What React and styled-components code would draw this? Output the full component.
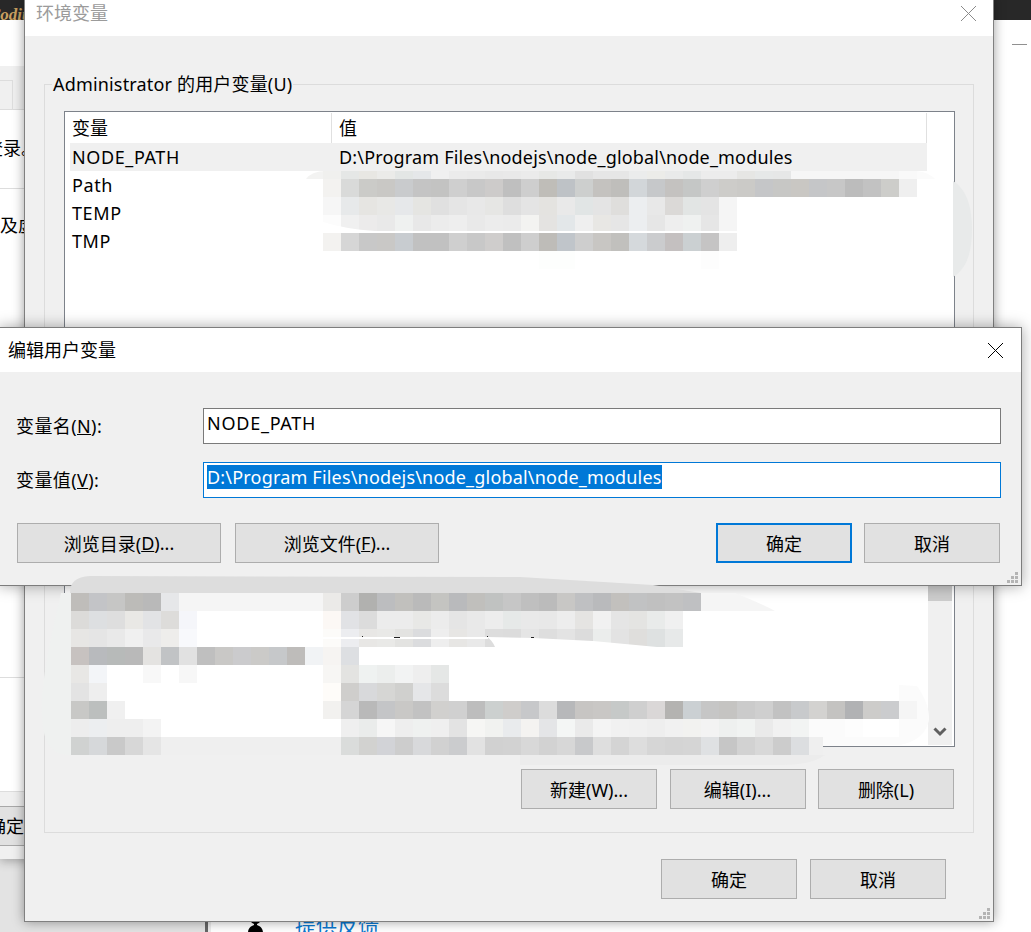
import React from "react";
import styled, { createGlobalStyle } from "styled-components";

const GlobalStyle = createGlobalStyle`
  html, body {
    margin: 0;
    padding: 0;
    background: #e3e3e3;
  }
  * {
    box-sizing: border-box;
  }
`;

// mosaic columns start at x = 323 and step 18px, "-" leaves a hole
const topRows = [
  { y: 171, h: 8, cells: "f0f0ee e5e7e6 e8e7e3 ebebe9 e3e6e5 e5e7e9 f0f0f0 ebebeb eaeaea e8e8e8 e9e9e9 ebebeb e7e8e6 e9eaea e1e1e1 e6e6e6 e6e6e6 ebecec ecece9 e9eaea e5e7e7 ececec ececec e6e6e4 e6e8e8 e6e7e7 f6f6f6 f6f6f6 f6f6f6 f6f6f6 f6f6f6 f6f6f6 f9f9f9" },
  { y: 179, h: 18, cells: "f3f2f0 d9dad9 cbcbc8 c9c8c5 c9cbcd c4c4c4 c3c3c2 cfcfcf c8c8c8 cdcbca bfbfbf cecece bfbdb8 bec2c6 cdcfce c4c2bf bfbebb d2d6d9 c6c8ca c4c2c0 c5c7c6 cfcfcf cdccc9 cbcac7 c5c6c8 c7c7c5 c9c7c3 c5c6c8 c7c7c7 bcbcbc c2c2c2 cdcdca efefef" },
  { y: 197, h: 18, cells: "f6f6f6 e7e9ea e6e5e2 e8e8e6 e6e8ea e5e5e2 e0e0e0 e5e5e5 e8e8e8 e6e6e4 dedede e4e4e4 e4e3e0 e9e9e9 e1e5e5 e4e4e4 dfdedc eceef0 e8e8e8 dbd9d7 e2e5e4 e4e4e4 f5f5f5" },
  { y: 215, h: 16, cells: "fcfcfc f0f0f0 ecebeb e9e9e9 eff1f0 e8e8e8 ececec eeeeee e9e9e9 ececec ebebeb f3f3f1 e4e3e1 e3e7e9 efefef e8e7e4 e6e6e6 eceef0 e6e6e6 eeeeee eff1f0 e6e6e6 f5f5f5" },
  { y: 233, h: 18, cells: "f3f2f0 d6d6d6 c8c8c8 c9c8c6 c8ccd0 c1c1c1 c1c1c1 cfcfcf c8c8c8 cfcdcc c0c0c0 cecece bebcb8 c0c5ca cecece c8c6c3 c1c0bd d5d9dc cbccce c4c0c0 cbd0d2 c5c4c4 eeeeee" },
  { y: 251, h: 18, cells: "- - - - - - - - - - - - fdfefd fdfefd - - - - - - - fdfdfd" },
];

// lower list, columns start at x = 71
const bottomRows = [
  { y: 593, cells: "bfbdba c3c4c7 c6c6c5 bcbbb8 b9b9b9 e6e7e9 f5f5f5 f5f5f5 f5f5f5 f5f5f5 f5f5f5 f5f5f5 f5f5f5 f5f5f5 ebeae8 cdcdcd b1b1af bcbdbf c1c0bd bababa c4c4c1 b9babc c0bfbc c0c2c1 c6c6c6 bfbfbf bbbbbb c8c7c5 bfc0c2 b9babc c2c0bd c1c2c3 c0c0c0 c2c2c2 bfc0c2" },
  { y: 611, cells: "dcdbd9 dddfe1 dedede e9e8e5 e2e3e5 dddcda f5f6fa - - - - - - - fcf8f5 e1e2e5 dcdcdc ececec ececec e8e8e6 ececec e5e5e5 e9e9e9 ededed e6e9e8 e9e9e9 e8e8e8 ededed e5e4e2 f1f1f1 e5e5e5 e4e4e2 e9ebea f0f0f0" },
  { y: 629, cells: "e7e6e4 e5e5e5 e9e9e9 f0f0f0 e9e9ea eeedeb f8f9fc - - - - - - - fcfbf9 ecedf0 e8e7e5 e9e9e7 e3e3e1 dbdcde eeeeee e7e6e4 e9e9e9 dddddd dcdcdc e5e5e5 dedede e3e3e3 dcdcdc ebedec e3e3e3 dfdedc dee1e1 e7e9e9" },
  { y: 647, cells: "c7c2c0 b8babd b7bab9 b9b9b9 e4e3e1 c1c3c5 e1e1e1 bfbfbf c9c8c6 cbcbcd cbcac8 c6c8ca bebcba f1f3f5 f6f4f2 dddfe2" },
  { y: 665, cells: "e8e7e5 f3f5f8 - - f8f8f8 - f7f7f7 - - - - - - - f7f6f4 e3e3e1 eff2f1 eceeed f2f3f3 eeeeee e5e7e6" },
  { y: 683, cells: "e3e3e3 eeeeee - - - - - - - - - - - - fefcf9 cfcecc d8d9db d6d6d4 d0d0ce e5e6e8 dcdcdc" },
  { y: 701, cells: "c8c8c6 bcbfbe f0f0f0 - - - - - - - - - - - f2f1ef d5d5d5 b9b9b9 c4c5c7 c9c8c6 c2c2c2 d1d0ce d0d0d0 bdbdbd ccd0cf cfcdcb c7c8ca dcdcdc b7b8ba c7c5c3 c9c7c5 c6c9c8 cfcfcf dad7d7 b4b3b1 cbd0d3 c6c6c6 c5c4c2 cbcbcb cfcfcf c2c2c2 c8cacc d3d2d0 c4c3c1 b1b2b4 cdccca cbccce f5f5f5" },
  { y: 719, cells: "ededed eceef0 eeeeee eeeeee f3f3f3 - - - - - - - - - - efefef eaeceb f6f6f6 eeeeee eff1f0 efefef e3e3e3 f6f6f4 f1f2f0 e9ebed f4f3f1 e4e5e7 f4f6f5 eaeaea f4f4f4 f1f1f1 f0f0f0 eeeeee f1f1f1 f2f2f0 f3f3f3 eef0ef f1f3f2 eaeaea f1f1f1 f2f4f3 fbfbfb fbfbfb fdfdfd" },
  { y: 737, cells: "d0d2d1 d6d8da c9c9c9 d7d7d7 e5e5e5 efefef efefef efefef efefef efefef efefef efefef efefef efefef efefef dadcdb d2d2d0 d2d3d7 cdcdcd d8d9db d1d1d1 cbccce e2e2e2 d1d1d1 d2d2d2 d8d8d8 d2d2d2 d7d7d7 c8c9cb dedede d4d4d4 dddddd d6d6d6 d4d4d4 d5d5d5 dfe1e3 c6c6c6 d2d2d2 d8d8d8 cccccc dcdee0" },
];

function MosaicRow({ x, y, h, cells }) {
  return cells.split(" ").map((color, i) =>
    color === "-" ? null : (
      <rect key={i} x={x + i * 18} y={y} width="18" height={h} fill={`#${color}`} />
    )
  );
}

function Mosaic() {
  return (
    <MosaicLayer viewBox="0 0 1031 932" shapeRendering="geometricPrecision">
      {/* smears round the blurred part */}
      <path d="M306 179 Q312 171 326 171 H341 V179 Z" fill="#f3f3f2" />
      <path d="M953 181 C968 190 972 210 972 229 C972 250 968 268 953 277 Z" fill="#e8eaea" />
      <path d="M899 171 H917 Q928 172 935 179 H899 Z" fill="#fbfbfb" />
      <path d="M70 593 C70 582 76 577 90 576 L520 577 L653 585 L701 593 Z" fill="#dddddd" />
      <path d="M701 593 H735 Q760 603 775 611 H701 Z" fill="#f5f5f5" />
      <path d="M61 593 C55 620 40 680 42 715 C43 745 52 755 71 755 V593 Z" fill="#eff1f0" />
      <path d="M899 685 L917 686 Q930 705 929 720 Q925 740 900 745 L823 746 V737 H899 Z" fill="#fbfbfb" />
      <path d="M520 755 H825 Q812 765 780 765 H520 Z" fill="#ececec" />
      <rect x="809" y="737" width="14" height="18" fill="#efefef" />

      <g shapeRendering="crispEdges">
        {topRows.map((row) => (
          <MosaicRow key={row.y} x={323} y={row.y} h={row.h} cells={row.cells} />
        ))}
        {bottomRows.map((row) => (
          <MosaicRow key={row.y} x={71} y={row.y} h={18} cells={row.cells} />
        ))}
      </g>

      <path d="M323 222 Q345 229 375 231 H323 Z" fill="#ffffff" />
      <rect x="323" y="637" width="165" height="2" fill="#ffffff" />
      <path d="M487 637 L533 638 L593 641 L657 647 H495 Q492 640 487 637 Z" fill="#ffffff" />
      <g fill="#222222">
        <rect x="362" y="636" width="1" height="1" />
        <rect x="394" y="637" width="6" height="1" />
        <rect x="487" y="636" width="1" height="1" />
        <rect x="531" y="637" width="3" height="1" />
      </g>
    </MosaicLayer>
  );
}

function CloseIcon({ color }) {
  return (
    <svg width="15" height="15" viewBox="0 0 15 15" fill="none" stroke={color} strokeWidth="1">
      <path d="M0 0 L15 15 M15 0 L0 15" />
    </svg>
  );
}

function Grip() {
  const dots = [[8, 0], [4, 4], [8, 4], [0, 8], [4, 8], [8, 8]];
  return (
    <GripIcon width="11" height="11" viewBox="0 0 11 11" fill="#b4b4b4">
      {dots.map(([x, y]) => (
        <rect key={`${x}-${y}`} x={x} y={y} width="3" height="3" />
      ))}
    </GripIcon>
  );
}

function App() {
  return (
    <Desktop>
      <GlobalStyle />

      <BehindWindow>
        <DarkStrip>
          <Brand>Codit</Brand>
        </DarkStrip>
        <BehindColumns>
          <LeftPane>
            <TabStrip>
              <Tab />
            </TabStrip>
            <PaneRow $height={79} $clip={-15}>登录。</PaneRow>
            <PaneText>及虚拟内存</PaneText>
            <Divider $at={416} />
            <Divider $at={113} />
            <PaneFooter>
              <PaneButton>确定</PaneButton>
            </PaneFooter>
          </LeftPane>
          <RightPane>
            <Minimize />
          </RightPane>
        </BehindColumns>
      </BehindWindow>

      <HelpPanel>
        <svg width="16" height="24" viewBox="0 0 16 24" fill="#000000">
          <circle cx="7.5" cy="5.5" r="5.5" />
          <path d="M6 10 H9 V12 C12 13 15 15 15 20 H0 C0 15 3 13 6 12 Z" />
          <rect x="13" y="8" width="2" height="1" />
        </svg>
        <HelpLink>提供反馈</HelpLink>
      </HelpPanel>

      <BackWindow>
        <TitleBar $height={36} $left={11} $right={17} $bottom={10}>
          <TitleText $muted>环境变量</TitleText>
          <CloseIcon color="#8a8a8a" />
        </TitleBar>
        <BackBody>
          <Group>
            <GroupLabel>Administrator 的用户变量(U)</GroupLabel>
            <VarList>
              <ListHead>
                <HeadCell>变量</HeadCell>
                <HeadCell>值</HeadCell>
              </ListHead>
              <VarRow $selected>
                <VarName>NODE_PATH</VarName>
                <VarValue>D:\Program Files\nodejs\node_global\node_modules</VarValue>
              </VarRow>
              <VarRow>
                <VarName>Path</VarName>
              </VarRow>
              <VarRow>
                <VarName>TEMP</VarName>
              </VarRow>
              <VarRow>
                <VarName>TMP</VarName>
              </VarRow>
              <Scrollbar>
                <Thumb />
                <svg width="14" height="10" viewBox="0 0 14 10" fill="none" stroke="#606060" strokeWidth="3">
                  <path d="M1.5 1.5 L7 7 L12.5 1.5" />
                </svg>
              </Scrollbar>
            </VarList>
            <GroupActions>
              <Button>新建(W)...</Button>
              <Button>编辑(I)...</Button>
              <Button>删除(L)</Button>
            </GroupActions>
          </Group>
          <WindowActions>
            <Button>确定</Button>
            <Button>取消</Button>
          </WindowActions>
        </BackBody>
        <Grip />
      </BackWindow>

      <EditDialog>
        <TitleBar $height={44} $left={8} $right={18}>
          <TitleText>编辑用户变量</TitleText>
          <CloseIcon color="#000000" />
        </TitleBar>
        <DialogBody>
          <FormGrid>
            <FieldLabel>
              变量名(<u>N</u>):
            </FieldLabel>
            <FieldBox>NODE_PATH</FieldBox>
            <FieldLabel>
              变量值(<u>V</u>):
            </FieldLabel>
            <FieldBox $focused>
              <Selection>D:\Program Files\nodejs\node_global\node_modules</Selection>
            </FieldBox>
          </FormGrid>
          <DialogActions>
            <Button $wide>
              浏览目录(<u>D</u>)...
            </Button>
            <Button $wide>
              浏览文件(<u>F</u>)...
            </Button>
            <ConfirmGroup>
              <Button $primary>确定</Button>
              <Button>取消</Button>
            </ConfirmGroup>
          </DialogActions>
        </DialogBody>
        <Grip />
      </EditDialog>

      <Mosaic />
    </Desktop>
  );
}

const Desktop = styled.div`
  position: relative;
  width: 1031px;
  height: 932px;
  overflow: hidden;
  background: #e3e3e3;
  font-family: "Noto Sans", "Noto Sans CJK SC", sans-serif;
  font-size: 18px;
  color: #000000;
`;

const BehindWindow = styled.div`
  position: absolute;
  left: 0;
  top: 0;
  width: 1031px;
  height: 859px;
  display: flex;
  flex-direction: column;
  background: #ffffff;
  box-shadow: 0 2px 10px rgba(0, 0, 0, 0.3);
`;

const DarkStrip = styled.div`
  height: 20px;
  flex: none;
  background: #282828;
  overflow: hidden;
`;

const Brand = styled.div`
  margin-left: -11px;
  font-family: "Liberation Serif", serif;
  font-style: italic;
  font-weight: bold;
  font-size: 17px;
  line-height: 30px;
  color: #c9a060;
`;

const BehindColumns = styled.div`
  flex: 1;
  display: flex;
`;

const LeftPane = styled.div`
  width: 205px;
  display: flex;
  flex-direction: column;
`;

const TabStrip = styled.div`
  height: 44px;
  margin-top: 46px;
  padding-top: 14px;
  background: #f0f0f0;
  border-bottom: 1px solid #dddddd;
`;

const Tab = styled.div`
  width: 13px;
  height: 30px;
  border-top: 1px solid #dddddd;
  border-right: 1px solid #dddddd;
`;

const PaneRow = styled.div`
  height: ${(props) => props.$height}px;
  margin-left: ${(props) => props.$clip}px;
  line-height: 76px;
  border-bottom: 1px solid #dddddd;
  white-space: nowrap;
`;

const PaneText = styled.div`
  height: 72px;
  line-height: 72px;
  white-space: nowrap;
`;

const Divider = styled.div`
  flex: none;
  margin-top: ${(props) => props.$at}px;
  height: 1px;
  background: #dddddd;
`;

const PaneFooter = styled.div`
  flex: 1;
  padding-top: 14px;
  background: #f0f0f0;
`;

const PaneButton = styled.div`
  height: 40px;
  margin-left: -12px;
  line-height: 38px;
  background: #e1e1e1;
  border-top: 1px solid #a8a8a8;
  border-bottom: 1px solid #a8a8a8;
`;

const RightPane = styled.div`
  flex: 1;
  display: flex;
  justify-content: flex-end;
  padding: 24px 4px 0 0;
`;

const Minimize = styled.div`
  width: 15px;
  height: 1px;
  background: #909090;
`;

const HelpPanel = styled.div`
  position: absolute;
  left: 205px;
  top: 859px;
  right: 0;
  height: 73px;
  display: flex;
  align-items: flex-start;
  gap: 31px;
  padding: 54px 0 0 40px;
  background: #ffffff;
  border-left: 3px solid #666666;
  box-shadow: inset 3px 0 0 #ececec;
`;

const HelpLink = styled.div`
  font-size: 21px;
  line-height: 26px;
  color: #0a78d0;
  margin-top: -1px;
  white-space: nowrap;
`;

const BackWindow = styled.div`
  position: absolute;
  left: 24px;
  top: -1px;
  width: 970px;
  height: 923px;
  display: flex;
  flex-direction: column;
  background: #f0f0f0;
  border: 1px solid #808080;
  box-shadow: 0 0 11px rgba(0, 0, 0, 0.38);
`;

const TitleBar = styled.div`
  height: ${(props) => props.$height}px;
  flex: none;
  display: flex;
  align-items: center;
  justify-content: space-between;
  padding: 0 ${(props) => props.$right}px ${(props) => props.$bottom || 0}px ${(props) => props.$left}px;
  background: #ffffff;
`;

const TitleText = styled.div`
  line-height: 26px;
  color: ${(props) => (props.$muted ? "#9b9b9b" : "#000000")};
`;

const BackBody = styled.div`
  flex: 1;
  min-height: 0;
  display: flex;
  flex-direction: column;
  padding: 35px 19px 0 19px;
`;

const Group = styled.fieldset`
  flex: 1;
  min-height: 0;
  min-width: 0;
  display: flex;
  flex-direction: column;
  margin: 0;
  padding: 14px 18px 23px 19px;
  border: 1px solid #dcdcdc;
`;

const GroupLabel = styled.legend`
  margin-left: -12px;
  padding: 0 1px;
  line-height: 26px;
  letter-spacing: 0.17px;
  white-space: nowrap;
`;

const VarList = styled.div`
  flex: 1;
  min-height: 0;
  display: flex;
  flex-direction: column;
  background: #ffffff;
  border: 1px solid #7d828a;
`;

const ListHead = styled.div`
  height: 31px;
  flex: none;
  display: grid;
  grid-template-columns: 267px 595px;
  padding-top: 1px;
`;

const HeadCell = styled.div`
  padding-left: 7px;
  line-height: 31px;
  border-right: 1px solid #e0e0e0;
`;

const VarRow = styled.div`
  height: 28px;
  flex: none;
  width: 857px;
  margin-left: 5px;
  display: grid;
  grid-template-columns: 262px 595px;
  line-height: 28px;
  background: ${(props) => (props.$selected ? "#f0f0f0" : "transparent")};
`;

const VarName = styled.div`
  padding-left: 2px;
  letter-spacing: 0.6px;
`;

const VarValue = styled.div`
  padding-left: 7px;
  letter-spacing: 0.17px;
  white-space: nowrap;
`;

const Scrollbar = styled.div`
  flex: none;
  width: 24px;
  height: 185px;
  margin: auto 2px 1px auto;
  display: flex;
  flex-direction: column;
  align-items: center;
  justify-content: space-between;
  padding: 25px 0 8px;
  background: #f0f0f0;
`;

const Thumb = styled.div`
  width: 24px;
  height: 16px;
  background: #cdcdcd;
`;

const GroupActions = styled.div`
  flex: none;
  display: flex;
  justify-content: flex-end;
  gap: 12.5px;
  margin-top: 22px;
  padding-right: 1px;
`;

const WindowActions = styled.div`
  flex: none;
  display: flex;
  justify-content: flex-end;
  gap: 13px;
  padding: 26px 28px 22px 0;
`;

const Button = styled.div`
  width: ${(props) => (props.$wide ? 204 : 136)}px;
  height: 40px;
  flex: none;
  display: flex;
  align-items: center;
  justify-content: center;
  background: #e1e1e1;
  border: ${(props) => (props.$primary ? "2px solid #0078d7" : "1px solid #adadad")};
  white-space: pre;
`;

const EditDialog = styled.div`
  position: absolute;
  left: -1px;
  top: 327px;
  width: 1023px;
  height: 259px;
  display: flex;
  flex-direction: column;
  background: #f0f0f0;
  border: 1px solid #7d7d7d;
  box-shadow: 0 0 14px rgba(0, 0, 0, 0.35);
`;

const DialogBody = styled.div`
  flex: 1;
  min-height: 0;
  display: flex;
  flex-direction: column;
`;

const FormGrid = styled.div`
  display: grid;
  grid-template-columns: 187px 1fr;
  row-gap: 18px;
  padding: 36px 20px 0 16px;
`;

const FieldLabel = styled.div`
  line-height: 36px;
  letter-spacing: 0.4px;
`;

const FieldBox = styled.div`
  height: 36px;
  padding: 2px 3px;
  line-height: 24px;
  letter-spacing: 0.75px;
  background: #ffffff;
  border: 1px solid ${(props) => (props.$focused ? "#0078d7" : "#7a7a7a")};
  white-space: nowrap;
`;

const Selection = styled.span`
  display: inline-block;
  height: 24px;
  letter-spacing: 0.19px;
  background: #0078d7;
  color: #ffffff;
`;

const DialogActions = styled.div`
  display: flex;
  gap: 14px;
  margin-top: 25px;
  padding: 0 21px 0 17px;
`;

const ConfirmGroup = styled.div`
  display: flex;
  gap: 12px;
  margin-left: auto;
`;

const GripIcon = styled.svg`
  position: absolute;
  right: 3px;
  bottom: 2px;
`;

const MosaicLayer = styled.svg`
  position: absolute;
  left: 0;
  top: 0;
  width: 1031px;
  height: 932px;
  pointer-events: none;
`;

export default App;
